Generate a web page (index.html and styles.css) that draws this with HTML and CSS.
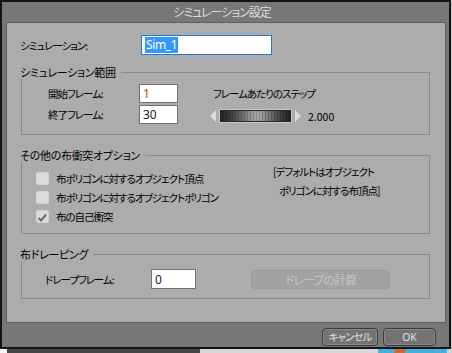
FILE: index.html
```html
<!DOCTYPE html>
<html lang="ja">
<head>
<meta charset="utf-8">
<title>シミュレーション設定</title>
<link rel="stylesheet" href="styles.css">
</head>
<body>
<div class="screen">
  <div class="window">
    <div class="titlebar">シミュレーション設定</div>
    <div class="panel">
      <div class="sim-row">
        <span class="sim-label">シミュレーション:</span>
        <div class="input input-sim"><span class="sel">Sim_1</span></div>
      </div>

      <fieldset class="group g1">
        <legend>シミュレーション範囲</legend>
        <div class="range">
          <div class="frames">
            <div class="frow"><span class="flabel">開始フレーム:</span><div class="input input-num"><span class="v-orange">1</span></div></div>
            <div class="frow"><span class="flabel">終了フレーム:</span><div class="input input-num">30</div></div>
          </div>
          <div class="step">
            <div class="step-title">フレームあたりのステップ</div>
            <div class="slider-row">
              <svg class="arrow" width="6" height="12" viewBox="0 0 6 12"><polygon points="6,0 6,12 0,6" fill="#dedede"/></svg>
              <div class="slider"></div>
              <svg class="arrow" width="6" height="12" viewBox="0 0 6 12"><polygon points="0,0 0,12 6,6" fill="#dedede"/></svg>
              <span class="step-val">2.000</span>
            </div>
          </div>
        </div>
      </fieldset>

      <fieldset class="group g2">
        <legend>その他の布衝突オプション</legend>
        <div class="opts">
          <div class="checks">
            <div class="chk-row"><span class="box"></span><span>布ポリゴンに対するオブジェクト頂点</span></div>
            <div class="chk-row"><span class="box"></span><span>布ポリゴンに対するオブジェクトポリゴン</span></div>
            <div class="chk-row"><span class="box"><svg width="13" height="13" viewBox="0 0 13 13"><path d="M2.5 8 L5 10.5 L10 4.5" fill="none" stroke="#6a6a6a" stroke-width="2"/></svg></span><span>布の自己衝突</span></div>
          </div>
          <div class="note">
            <div>[デフォルトはオブジェクト</div>
            <div class="note2">ポリゴンに対する布頂点]</div>
          </div>
        </div>
      </fieldset>

      <fieldset class="group g3">
        <legend>布ドレーピング</legend>
        <div class="drape">
          <span class="dlabel">ドレープフレーム:</span>
          <div class="input input-drape">0</div>
          <div class="btn-disabled">ドレープの計算</div>
        </div>
      </fieldset>
    </div>
    <div class="footer">
      <button class="btn">キャンセル</button>
      <button class="btn btn-ok">OK</button>
    </div>
  </div>
  <div class="strip">
    <span class="s-white"></span><span class="s-dark"></span><span class="s-light"></span><span class="s-cyan"></span><span class="s-orange"></span><span class="s-cyan2"></span>
  </div>
</div>
</body>
</html>
```

FILE: styles.css
```css
* { box-sizing: border-box; }

body {
  margin: 0;
  background: #cfcfcf;
  font-family: "Noto Sans CJK JP", sans-serif;
  font-size: 10.5px;
  letter-spacing: -1px;
  color: #000;
  font-feature-settings: "palt";
}

.screen { width: 452px; height: 353px; overflow: hidden; }

.window {
  width: 451px;
  height: 349px;
  border: 2px solid #141414;
  background: #777;
  display: flex;
  flex-direction: column;
  padding: 0 3px 0 4px;
}

.titlebar {
  height: 20px;
  line-height: 19px;
  text-align: center;
  color: #dcdcdc;
  font-size: 12px;
  letter-spacing: -1px;
  padding-right: 8px;
}

.panel {
  height: 301px;
  background: #acacac;
  border: 1px solid #606060;
  padding-top: 12px;
  display: flex;
  flex-direction: column;
}

.sim-row {
  display: flex;
  align-items: center;
  height: 20px;
  padding-left: 13px;
}
.sim-label { width: 121px; }

.input {
  background: #fff;
  display: flex;
  align-items: center;
  font-family: "Noto Sans", sans-serif;
  font-size: 12px;
  letter-spacing: 0;
  color: #222;
}
.input-sim {
  width: 131px;
  height: 20px;
  border: 1px solid #1a7bd6;
  padding-left: 3px;
}
.sel {
  background: #3397ff;
  color: #fff;
  line-height: 16px;
  padding: 0 1px;
  letter-spacing: -0.4px;
}

.group {
  margin: 10px 0 0 14px;
  width: 409px;
  border: 1px solid #8a8a8a;
  padding: 0;
  min-inline-size: 0;
}
.group legend {
  padding: 0 5px 0 0;
  margin-left: -2px;
  line-height: 14px;
  font-size: 11px;
  letter-spacing: -0.3px;
}
.g2, .g3 { margin-top: 13px; }

.range { display: flex; padding: 5px 0 10px 0; }
.frames { display: flex; flex-direction: column; gap: 2px; padding-left: 26px; }
.frow { display: flex; align-items: center; height: 19px; }
.flabel { width: 91px; }
.input-num {
  width: 39px;
  height: 19px;
  border: 1px solid #727272;
  padding-left: 3px;
}
.v-orange { color: #9a5a14; }

.step { margin-left: 32px; }
.step-title { margin-top: 3px; line-height: 14px; padding-left: 3px; }
.slider-row { display: flex; align-items: center; height: 14px; margin-top: 8px; }
.arrow { display: block; flex: none; }
.slider {
  width: 73px;
  height: 14px;
  margin: 0 3px;
  border: 1px solid #c9c9c9;
  background:
    repeating-linear-gradient(90deg, rgba(0,0,0,0.18) 0 1px, transparent 1px 3px),
    linear-gradient(90deg, #1f1f1f, #4a4a4a 20%, #9a9a9a 45%, #a8a8a8 55%, #4a4a4a 82%, #1f1f1f);
  box-shadow: inset 0 0 0 1px #262626;
}
.step-val { margin-left: 7px; letter-spacing: 0; }

.opts { display: flex; }
.checks {
  width: 251px;
  padding: 7px 0 7px 14px;
  display: flex;
  flex-direction: column;
}
.chk-row { display: flex; align-items: center; height: 19px; gap: 7px; }
.box {
  width: 13px;
  height: 13px;
  background: #dcdcdc;
  border: 1px solid #d2d2d2;
  border-radius: 2px;
  flex: none;
}
.box svg { display: block; margin: -1px 0 0 -1px; }
.note { line-height: 19px; }
.note2 { padding-left: 6px; }

.drape { display: flex; align-items: center; padding: 8px 0 9px 23px; }
.dlabel { width: 106px; }
.input-drape {
  width: 45px;
  height: 20px;
  border: 1px solid #727272;
  padding-left: 3px;
}
.btn-disabled {
  margin-left: 55px;
  width: 139px;
  height: 19px;
  border: 1px solid #9a9a9a;
  border-radius: 4px;
  background: #a2a2a2;
  color: #c2c2c2;
  font-size: 12px;
  text-align: center;
  line-height: 17px;
}

.footer {
  flex: 1;
  display: flex;
  justify-content: flex-end;
  gap: 5px;
  padding: 5px 10px 0 0;
}
.btn {
  width: 56px;
  height: 18px;
  border: 1px solid #3a3a3a;
  border-radius: 4px;
  background: #737373;
  box-shadow: inset 0 0 0 1px #8a8a8a;
  color: #e0e0e0;
  font-family: "Noto Sans CJK JP", sans-serif;
  font-feature-settings: "palt";
  font-size: 10.5px;
  letter-spacing: -1px;
  line-height: 16px;
  padding: 0;
}
.btn-ok { width: 53px; font-family: "Noto Sans", sans-serif; letter-spacing: 0; }

.strip { display: flex; height: 4px; background: #d4d4d4; }
.strip span { display: block; height: 4px; }
.s-white { width: 7px; background: #f4f4f4; }
.s-dark { width: 193px; background: #444; }
.s-light { width: 178px; background: #d8d8d8; }
.s-cyan { width: 16px; background: #41b3dc; }
.s-orange { width: 11px; background: #c4702c; }
.s-cyan2 { width: 42px; background: #41b3dc; }
```
